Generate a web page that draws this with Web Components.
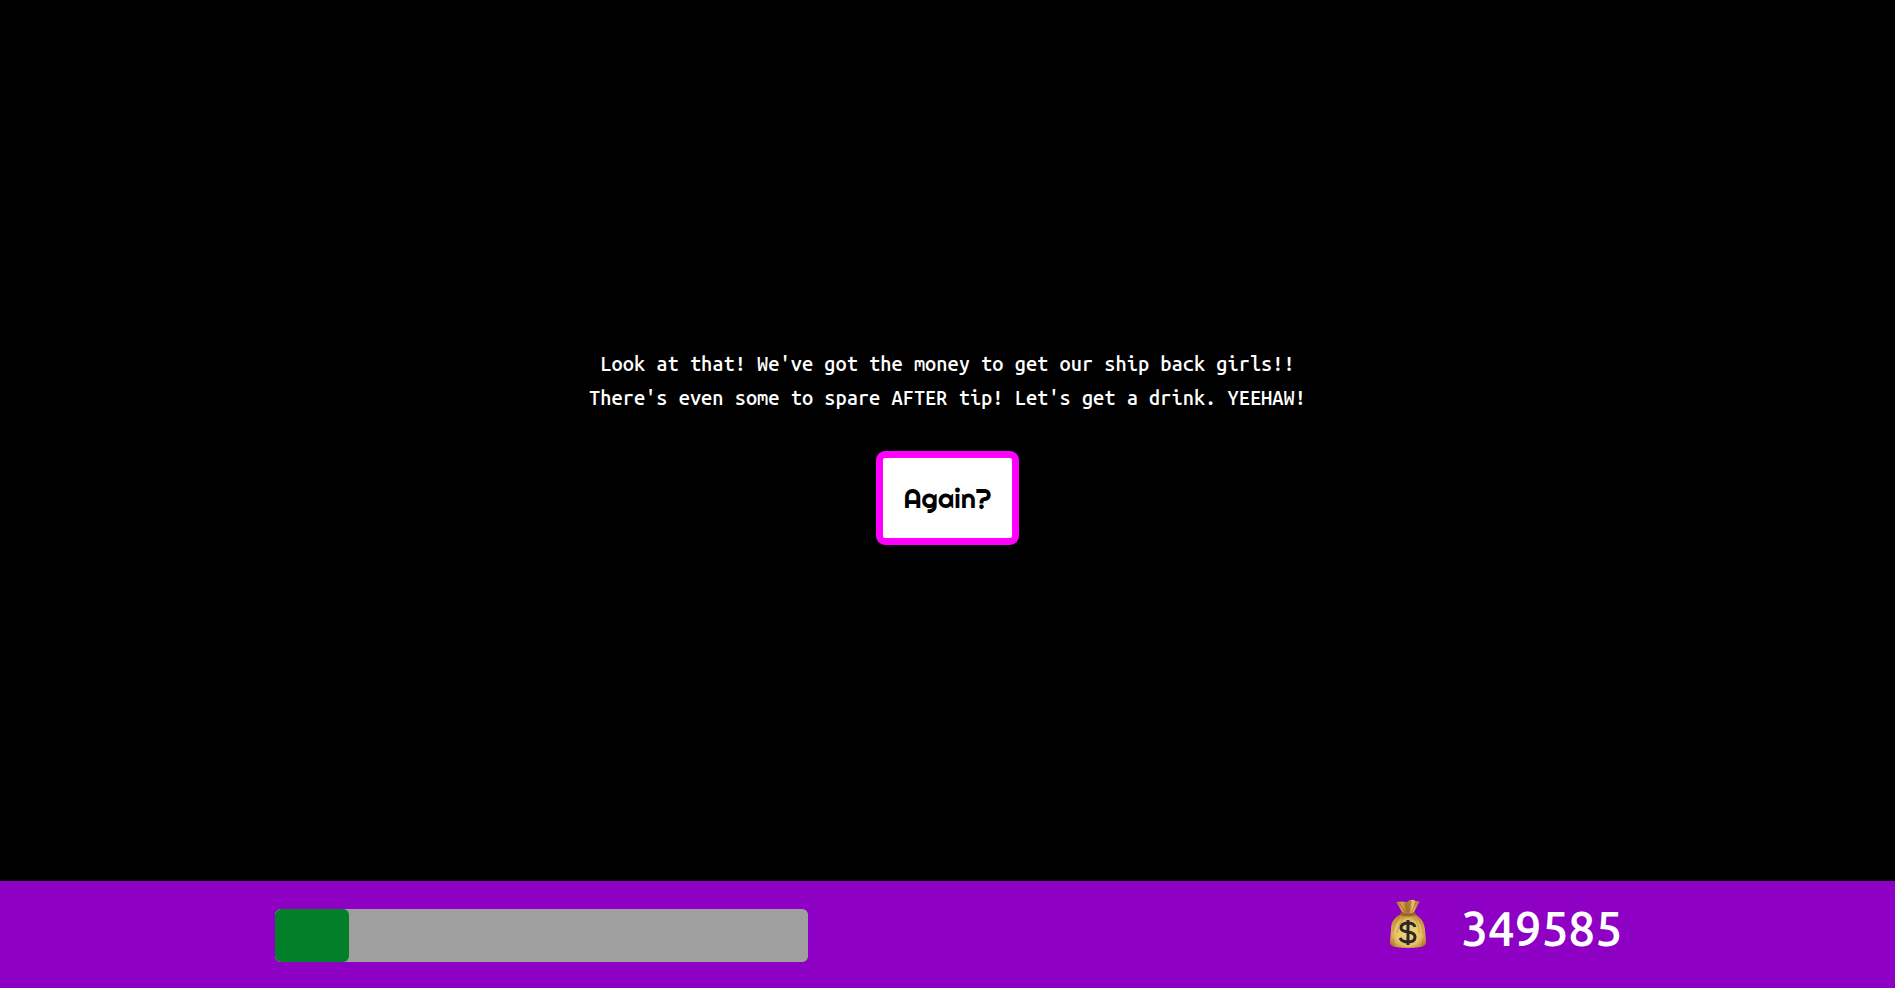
<!DOCTYPE html>
<html lang="en">
<head>
<meta charset="utf-8">
<meta name="viewport" content="width=device-width, initial-scale=1">
<title>Again?</title>
<style>
html, body { margin: 0; background: #000; }
</style>
</head>
<body>
<game-screen></game-screen>
<script>
function define(name, html) {
  const template = document.createElement('template');
  template.innerHTML = html;
  customElements.define(name, class extends HTMLElement {
    constructor() {
      super();
      this.attachShadow({ mode: 'open' }).append(template.content.cloneNode(true));
    }
  });
}

define('end-message', `
<style>
:host { display: block; text-align: center; font: 500 20px/34px "Ubuntu Mono", "DejaVu Sans Mono", monospace; color: #fff; }
p { margin: 0; }
</style>
<p><slot name="first"></slot></p>
<p><slot name="second"></slot></p>`);

define('retry-button', `
<style>
:host { display: block; }
button { display: block; box-sizing: border-box; padding: 20px; border: 7px solid #f0f; border-radius: 9px; background: #fff; color: #000; font: 400 27px/40px Righteous, Lato, sans-serif; cursor: pointer; }
</style>
<button type="button"><slot></slot></button>`);

define('time-meter', `
<style>
:host { display: block; }
progress { display: block; width: 100%; height: 53px; appearance: none; -webkit-appearance: none; border: 0; border-radius: 6px; overflow: hidden; background: #9f9f9f; }
progress::-webkit-progress-bar { background: #9f9f9f; border-radius: 6px; }
progress::-webkit-progress-value { background: #028029; border-radius: 6px; }
</style>
<progress max="1000" value="139" aria-label="Time left"></progress>`);

define('money-bag', `
<style>
:host { display: block; }
svg { display: block; width: 38px; height: 50px; }
</style>
<svg viewBox="0 0 38 50" aria-hidden="true">
  <defs>
    <radialGradient id="sack" cx=".5" cy=".55" r=".62">
      <stop offset="0" stop-color="#f5d979"/><stop offset=".6" stop-color="#e8c163"/>
      <stop offset=".85" stop-color="#c08f3a"/><stop offset="1" stop-color="#8d5b20"/>
    </radialGradient>
    <linearGradient id="neck" x2="1">
      <stop offset="0" stop-color="#a36c2a"/><stop offset=".25" stop-color="#d9a34a"/>
      <stop offset=".5" stop-color="#a76e2c"/><stop offset=".7" stop-color="#efc569"/><stop offset="1" stop-color="#9a6128"/>
    </linearGradient>
  </defs>
  <path d="M12 15C6 18 2 22 2 30L1 42Q0 47 6 48Q19 50 32 48Q38 47 37 42L36 30C35 22 31 18 26 15Z" fill="url(#sack)"/>
  <path d="M7 3L13 13Q19 17 25 13L31 2Q27 3 25 1Q21 0 18 3Q12 2 7 3Z" fill="url(#neck)"/>
  <path d="M11 5L16 13M16 4L18 13M22 2L20 13M27 3L23 13" stroke="#8f5b24" stroke-opacity=".6" fill="none"/>
  <path d="M12 13Q19 16 26 13L27 16Q19 19 11 16Z" fill="#9c672b"/>
  <path d="M11 18Q5 24 4 33M15 18Q9 26 8 34M24 18Q31 26 30 34M28 18Q34 25 34 35M4 40L5 47M34 40L33 47" stroke="#875820" stroke-opacity=".35" fill="none"/>
  <path d="M26 28Q25 24 19 24Q12 24 12 29Q12 32 19 33Q26 34 26 38Q26 43 19 43Q13 43 11 39M19 21V46" stroke="#29282c" stroke-width="3" fill="none"/>
</svg>`);

define('status-bar', `
<style>
:host { display: grid; grid-template-columns: 39.6% auto; justify-content: space-between; align-items: start; box-sizing: border-box; height: 107px; padding: 18px 14.4% 0 14.5%; background: #8e00c4; color: #fff; }
time-meter { margin-top: 10px; }
.money { display: flex; gap: 34px; }
output { font: 500 48px/58px "Ubuntu Mono", "Noto Sans", monospace; }
</style>
<time-meter></time-meter>
<div class="money"><money-bag></money-bag><output aria-label="Money">349585</output></div>`);

define('game-screen', `
<style>
:host { display: flex; flex-direction: column; min-height: 100vh; background: #000; }
main { flex: 1; display: flex; flex-direction: column; align-items: center; justify-content: center; gap: 36px; padding-top: 11px; }
</style>
<main>
  <end-message>
    <span slot="first">Look at that! We've got the money to get our ship back girls!!</span>
    <span slot="second">There's even some to spare AFTER tip! Let's get a drink. YEEHAW!</span>
  </end-message>
  <retry-button>Again?</retry-button>
</main>
<status-bar></status-bar>`);
</script>
</body>
</html>
